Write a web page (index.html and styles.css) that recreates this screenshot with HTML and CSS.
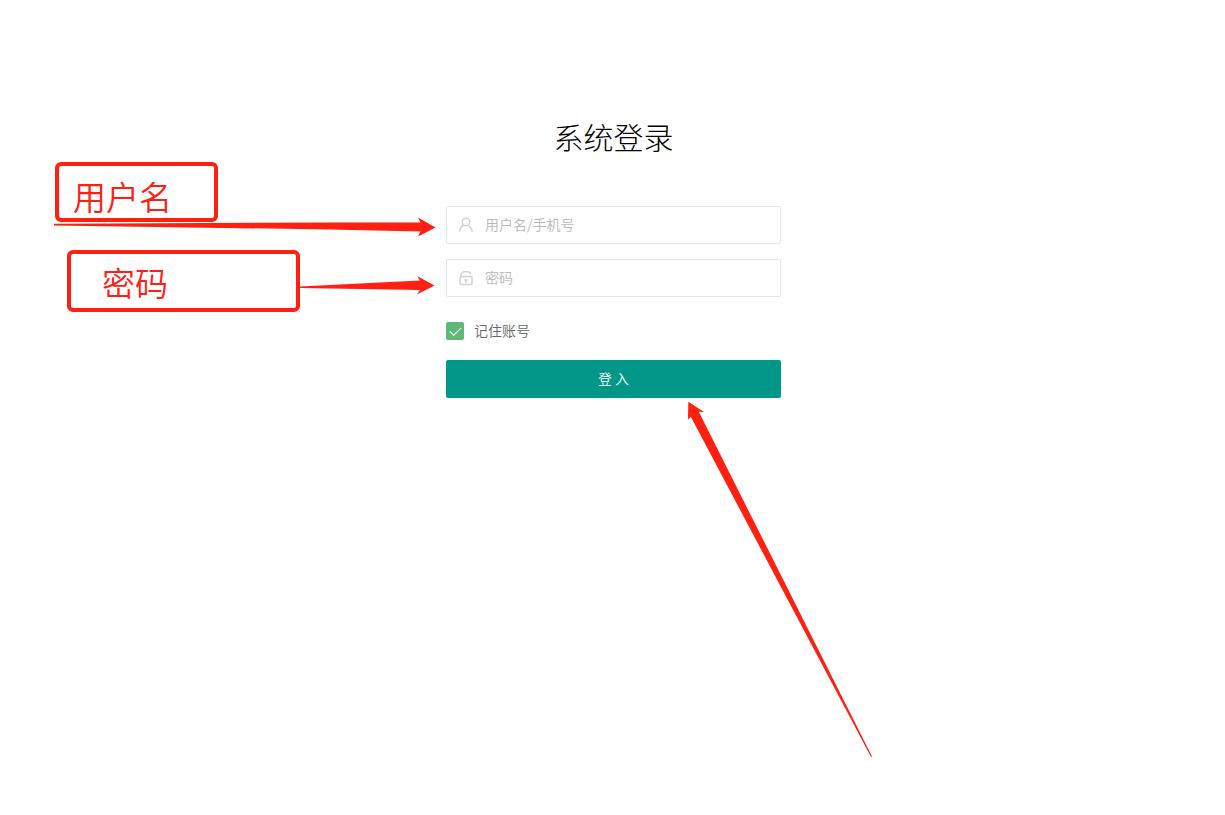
FILE: index.html
```
<!DOCTYPE html>
<html lang="zh-CN">
<head>
<meta charset="UTF-8">
<meta name="viewport" content="width=device-width, initial-scale=1.0">
<title>系统登录</title>

<link rel="stylesheet" href="styles.css">
</head>
<body>

<main class="login">
    <h1 class="login-title">系统登录</h1>

    <form class="login-form">
        <div class="field">
            <label class="field-icon" for="username" aria-label="用户名">
                <svg viewBox="0 0 16 16" width="16" height="16">
                    <circle cx="8" cy="5" r="3.8"/>
                    <path d="M6 8.3C3.4 9.2 2 11.6 1.8 14.8M10.8 9.2C13 10.3 14 12.2 14.2 14.8"/>
                </svg>
            </label>
            <input type="text" id="username" placeholder="用户名/手机号">
        </div>

        <div class="field">
            <label class="field-icon" for="password" aria-label="密码">
                <svg viewBox="0 0 16 16" width="16" height="16">
                    <rect x="2" y="6.5" width="12" height="8" rx="0.8"/>
                    <path d="M3 6.5V5.2C3 2.8 5.2 1.4 8 1.4C10.4 1.4 12.2 2.3 12.8 4M8 9V13M6.4 10.2H9.6"/>
                </svg>
            </label>
            <input type="password" id="password" placeholder="密码">
        </div>

        <div class="remember">
            <input type="checkbox" id="remember" checked>
            <label for="remember">记住账号</label>
        </div>

        <button type="submit" class="login-btn">登 入</button>
    </form>
</main>

<!-- notes over the page -->
<div class="note note-user">用户名</div>
<div class="note note-pass">密码</div>

<svg class="arrows" viewBox="0 0 900 780" width="900" height="780" aria-hidden="true">
    <path d="M54 223.8L330 222.5L420.5 222.5L418 217.5L435.5 227.5L418 236.5L420.5 231.5L330 229.5L54 225.4Z"/>
    <path d="M300 286.6L420 280.5L417 276L434.5 285.5L417 294.5L420 290L300 288Z"/>
    <path d="M688.3 401.7L704 412L698.8 411.8L872 756.5L871 757L690.8 416.8L688 419.5Z"/>
</svg>

</body>
</html>
```
FILE: styles.css
```
*{
    margin:0;
    padding:0;
    box-sizing:border-box;
}

body{
    background:#fff;
    color:#666;
    font-family:"Noto Sans CJK SC",sans-serif;
    font-size:14px;
    font-weight:350;
    line-height:24px;
}

.login{
    width:100%;
    max-width:377px;
    margin:0 auto;
    padding:118px 20px 20px 22px;
}

.login-title{
    margin-bottom:52px;
    color:#000;
    font-size:30px;
    font-weight:300;
    line-height:36px;
    text-align:center;
}

.login-form{
    display:flex;
    flex-direction:column;
}

.field{
    display:flex;
    align-items:center;
    height:38px;
    margin-bottom:15px;
    border:1px solid #e6e6e6;
    border-radius:2px;
}

.field-icon{
    display:flex;
    justify-content:center;
    width:38px;
}

.field-icon svg{
    fill:none;
    stroke:#d2d2d2;
    stroke-width:1.5;
}

.field input{
    flex:1;
    min-width:0;
    height:36px;
    padding-bottom:2px;
    border:none;
    outline:none;
    background:none;
    font:inherit;
}

.field input::placeholder{
    color:#b8b8b8;
}

.remember{
    display:flex;
    align-items:center;
    gap:10px;
    height:38px;
    margin-bottom:10px;
}

.remember label{
    padding-bottom:2px;
}

.remember input{
    appearance:none;
    display:grid;
    place-items:center;
    width:18px;
    height:18px;
    border-radius:2px;
    background:#ddd;
}

.remember input:checked{
    background:#5fb878;
}

.remember input:checked::after{
    content:"";
    width:10px;
    height:5px;
    margin-bottom:3px;
    border-left:1px solid #fff;
    border-bottom:1px solid #fff;
    transform:rotate(-45deg);
}

.login-btn{
    height:38px;
    padding-bottom:2px;
    border:none;
    border-radius:2px;
    background:#009688;
    color:#fff;
    font:inherit;
    cursor:pointer;
}

.login-btn:hover{
    opacity:.8;
}

.note{
    position:absolute;
    border:4px solid #ff2012;
    border-radius:6px;
    color:#ff2012;
    font-size:33px;
}

.note-user{
    left:55px;
    top:162px;
    width:163px;
    height:60px;
    padding-left:14px;
    line-height:60px;
}

.note-pass{
    left:67px;
    top:250px;
    width:233px;
    height:62px;
    padding-left:31px;
    line-height:56px;
}

.arrows{
    position:absolute;
    left:0;
    top:0;
    fill:#ff2012;
    pointer-events:none;
}
```
